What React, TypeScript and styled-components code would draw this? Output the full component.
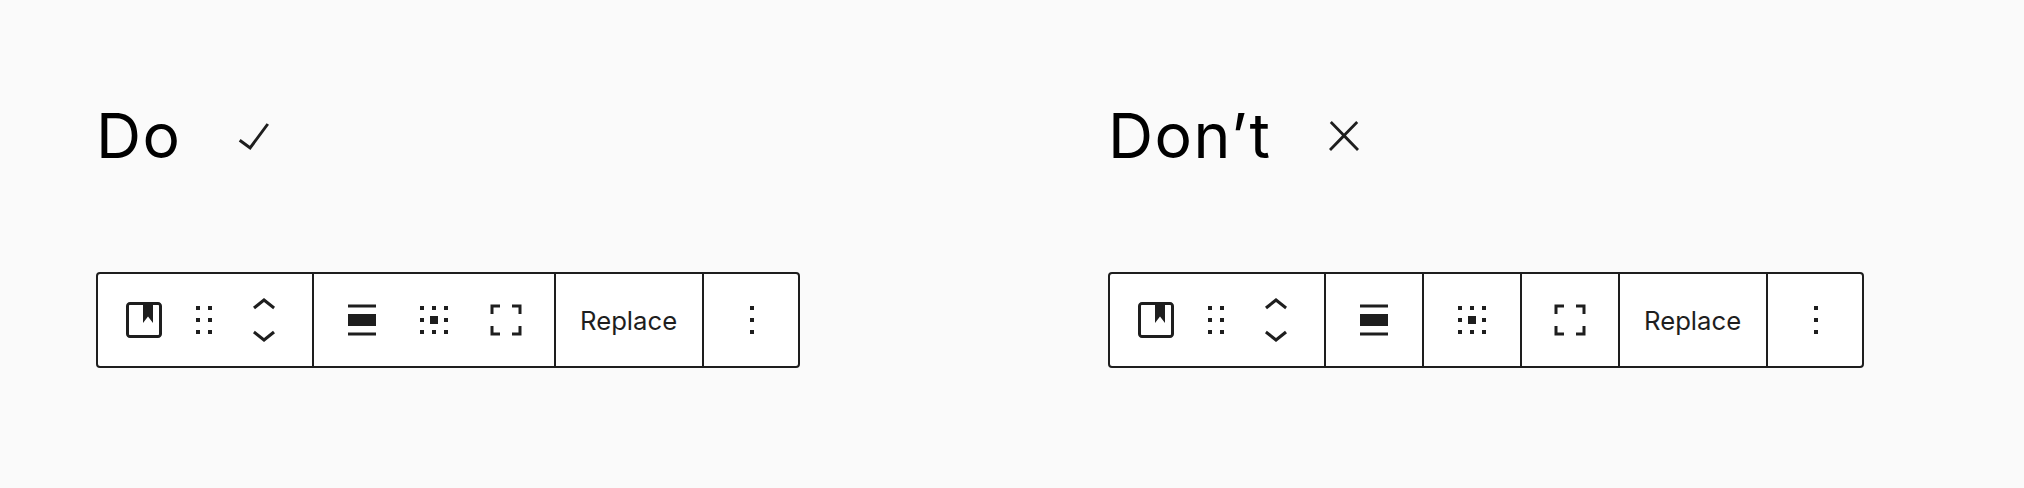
import React from "react";
import styled, { createGlobalStyle } from "styled-components";

const INK = "#1e1e1e";

const GlobalStyle = createGlobalStyle`
  *, *::before, *::after { box-sizing: border-box; }
  body {
    margin: 0;
    background: #fafafa;
    font-family: Inter, "Liberation Sans", sans-serif;
    color: ${INK};
  }
`;

const Page = styled.main`
  display: grid;
  grid-template-columns: 1012px 1012px;
  height: 488px;
`;

const Example = styled.section`
  display: flex;
  flex-direction: column;
  align-items: flex-start;
  gap: 96px;
  padding: 96px 0 0 96px;
`;

const Header = styled.header`
  display: flex;
  align-items: center;
  height: 80px;
`;

const Title = styled.h2<{ $width: number }>`
  width: ${(p) => p.$width}px;
  margin: 0;
  padding-bottom: 2px;
  font-size: 62.5px;
  font-weight: 400;
  line-height: 78px;
  letter-spacing: 1.5px;
  white-space: nowrap;
  color: #000;
`;

const Toolbar = styled.div`
  display: flex;
  height: 96px;
  border: 2px solid ${INK};
  border-radius: 4px;
  background: #fff;
`;

const Group = styled.div<{ $gap?: number; $start?: number; $end?: number }>`
  display: flex;
  align-items: center;
  gap: ${(p) => p.$gap ?? 24}px;
  padding: 0 ${(p) => p.$end ?? 24}px 0 ${(p) => p.$start ?? 24}px;

  & + & {
    border-left: 2px solid ${INK};
  }
`;

const IconButton = styled.button`
  display: flex;
  width: 48px;
  height: 48px;
  padding: 0;
  border: 0;
  background: none;
`;

const Movers = styled(IconButton)`
  height: 76px;
`;

const TextButton = styled.button`
  width: 98px;
  padding: 2px 0 0;
  border: 0;
  background: none;
  font: 400 25.7px/48px Inter, "Liberation Sans", sans-serif;
  text-align: left;
  white-space: nowrap;
  color: ${INK};
`;

const Glyph = styled.svg`
  display: block;
  flex: none;
  fill: ${INK};
`;

const Icon = ({ d }: { d: string }) => (
  <Glyph width="48" height="48" viewBox="0 0 24 24" aria-hidden="true">
    <path d={d} />
  </Glyph>
);

const icons = {
  check: "M18.3 5.6L9.9 16.9l-4.6-3.4-.9 1.2 5.8 4.3 9.3-12.6z",
  close:
    "M13 11.8l6.1-6.3-1-1-6.1 6.2-6.1-6.2-1 1 6.1 6.3-6.5 6.7 1 1 6.5-6.6 6.5 6.6 1-1z",
  cover:
    "M19 3H5c-1.1 0-2 .9-2 2v14c0 1.1.9 2 2 2h14c1.1 0 2-.9 2-2V5c0-1.1-.9-2-2-2zm.5 16c0 .3-.2.5-.5.5H5c-.3 0-.5-.2-.5-.5V5c0-.3.2-.5.5-.5h6.5v9l2.5-3.2 2.5 3.2v-9H19c.3 0 .5.2.5.5v14z",
  drag: "M8 5h2v2H8zM8 11h2v2H8zM8 17h2v2H8zM14 5h2v2h-2zM14 11h2v2h-2zM14 17h2v2h-2z",
  align: "M5 4.25h14v1.5H5zM5 9h14v6H5zM5 18.25h14v1.5H5z",
  position:
    "M5 5h2v2H5zM11 5h2v2h-2zM17 5h2v2h-2zM5 11h2v2H5zM10 10h4v4h-4zM17 11h2v2h-2zM5 17h2v2H5zM11 17h2v2h-2zM17 17h2v2h-2z",
  fullscreen:
    "M4.25 9h1.5V5.75H9v-1.5H4.25V9zM15 4.25v1.5h3.25V9h1.5V4.25H15zM5.75 15h-1.5v4.75H9v-1.5H5.75V15zM18.25 18.25H15v1.5h4.75V15h-1.5v3.25z",
  more: "M11 5h2v2h-2zM11 11h2v2h-2zM11 17h2v2h-2z",
};

const Tool = ({ name, label }: { name: keyof typeof icons; label: string }) => (
  <IconButton aria-label={label}>
    <Icon d={icons[name]} />
  </IconButton>
);

const BlockGroup = () => (
  <Group $gap={12} $start={22}>
    <Tool name="cover" label="Cover" />
    <Tool name="drag" label="Drag" />
    <Movers aria-label="Move up or down">
      <Glyph width="48" height="76" viewBox="0 0 24 38" aria-hidden="true">
        <path d="M6.5 12.4L12 8l5.5 4.4-.9 1.2L12 10l-4.5 3.6-1-1.2z" />
        <path d="M17.5 25.6L12 30l-5.5-4.4.9-1.2L12 28l4.5-3.6 1 1.2z" />
      </Glyph>
    </Movers>
  </Group>
);

const ActionGroups = () => (
  <>
    <Group>
      <TextButton>Replace</TextButton>
    </Group>
    <Group $end={22}>
      <Tool name="more" label="Options" />
    </Group>
  </>
);

export default function App() {
  return (
    <Page>
      <GlobalStyle />
      <Example>
        <Header>
          <Title $width={134}>Do</Title>
          <Icon d={icons.check} />
        </Header>
        <Toolbar>
          <BlockGroup />
          <Group>
            <Tool name="align" label="Align" />
            <Tool name="position" label="Content position" />
            <Tool name="fullscreen" label="Full height" />
          </Group>
          <ActionGroups />
        </Toolbar>
      </Example>
      <Example>
        <Header>
          <Title $width={212}>Don’t</Title>
          <Icon d={icons.close} />
        </Header>
        <Toolbar>
          <BlockGroup />
          <Group>
            <Tool name="align" label="Align" />
          </Group>
          <Group>
            <Tool name="position" label="Content position" />
          </Group>
          <Group>
            <Tool name="fullscreen" label="Full height" />
          </Group>
          <ActionGroups />
        </Toolbar>
      </Example>
    </Page>
  );
}
